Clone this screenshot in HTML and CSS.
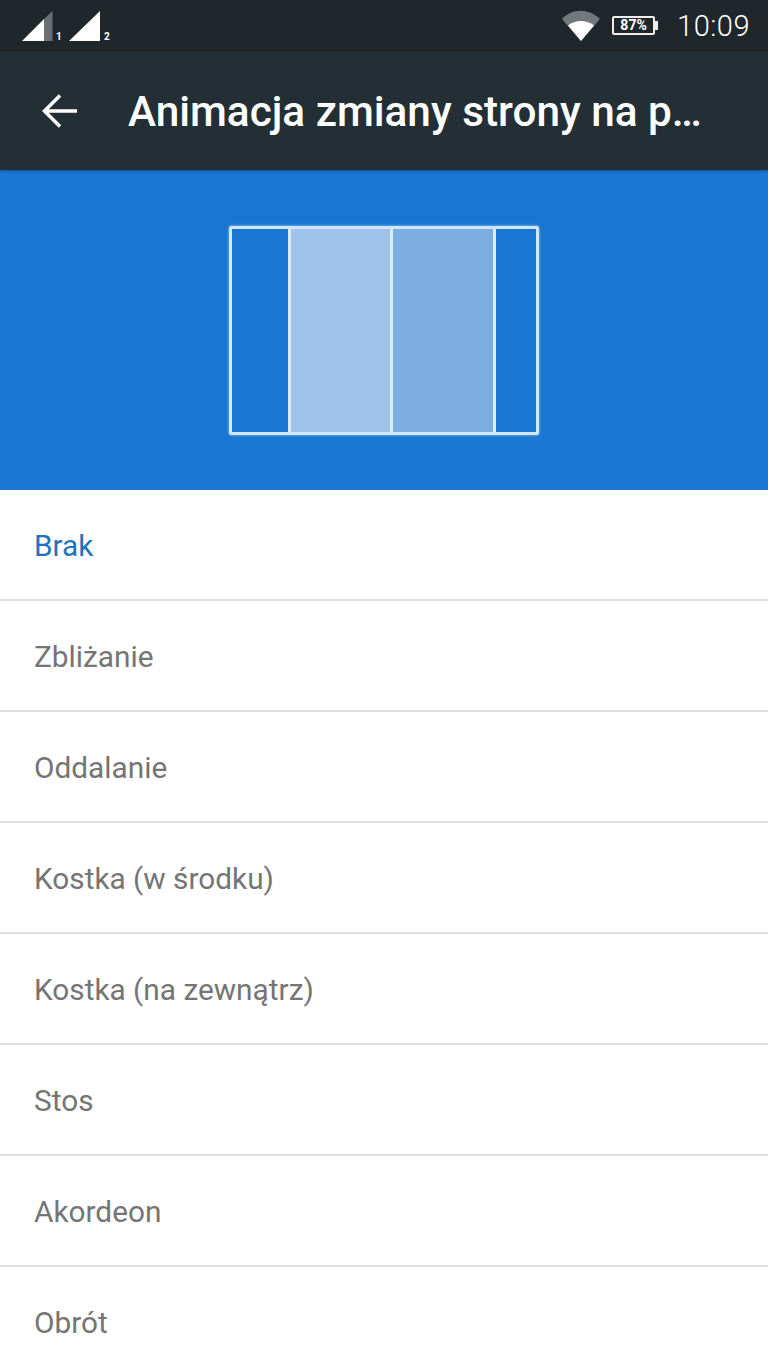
FILE: index.html
```html
<html>

<head>
    <title>Animacja zmiany strony</title>
    <link rel="stylesheet" href="styles.css">
</head>

<body>
    <div class="status-bar">
        <div class="signals">
            <svg class="signal" width="31" height="32" viewBox="0 0 31 32">
                <path d="M22 31H0L22 9z" fill="#fff" />
                <path d="M22 31V9L30.500 1V31z" fill="#6b7173" />
            </svg>
            <span class="sim">1</span>
            <svg class="signal" width="32" height="32" viewBox="0 0 32 32">
                <path d="M0 31L31 1V31z" fill="#fff" />
            </svg>
            <span class="sim">2</span>
        </div>
        <div class="status-right">
            <svg class="wifi" width="38" height="31" viewBox="0 0 38 31">
                <path d="M0 9C10-2 27-2 38 9L19 31z" fill="#73787a" />
                <path d="M6 15.500C13 9.500 25 9.500 32 15.500L19 31z" fill="#fff" />
            </svg>
            <div class="battery">
                <div class="battery-body">87%</div>
                <div class="battery-tip"></div>
            </div>
            <span class="clock">10:09</span>
        </div>
    </div>

    <div class="toolbar">
        <svg class="back" width="36" height="36" viewBox="0 0 36 36">
            <path d="M35 18H3M18 2.500L2.500 18L18 33.500" fill="none" stroke="#fff" stroke-width="3.500" />
        </svg>
        <h1 class="title">Animacja zmiany strony na p…</h1>
    </div>

    <div class="hero">
        <div class="preview">
            <div class="pane pane-side"></div>
            <div class="pane pane-light"></div>
            <div class="pane pane-mid"></div>
            <div class="pane pane-end"></div>
        </div>
    </div>

    <ul class="options">
        <li class="option option-active">Brak</li>
        <li class="option">Zbliżanie</li>
        <li class="option">Oddalanie</li>
        <li class="option">Kostka (w środku)</li>
        <li class="option">Kostka (na zewnątrz)</li>
        <li class="option">Stos</li>
        <li class="option">Akordeon</li>
        <li class="option">Obrót</li>
    </ul>
</body>

</html>
```

FILE: styles.css
```css
html,
body {
    height: 100%;
}

body {
    font-family: Roboto, "Liberation Sans", sans-serif;
    background-color: #fff;
    margin: 0;
    padding: 0;
    overflow: hidden;
}

.status-bar {
    height: 51px;
    background-color: #1f272a;
    color: #fff;
    display: flex;
    align-items: center;
    justify-content: space-between;
    padding: 0 18px 0 22px;
}

.signals {
    display: flex;
    align-items: flex-end;
    height: 32px;
}

.signal {
    display: block;
}

.sim {
    font-size: 10px;
    font-weight: 700;
    width: 13px;
    margin-left: 3px;
    line-height: 10px;
}

.status-right {
    display: flex;
    align-items: center;
}

.wifi {
    margin-right: 12px;
    margin-top: -1px;
}

.battery {
    display: flex;
    align-items: center;
    margin-right: 19px;
}

.battery-body {
    width: 43px;
    height: 19px;
    box-sizing: border-box;
    border: 2px solid #eee;
    border-radius: 2px;
    font-size: 14px;
    font-weight: 700;
    line-height: 15px;
    text-align: center;
}

.battery-tip {
    width: 3px;
    height: 9px;
    background-color: #eee;
}

.clock {
    font-size: 29px;
    font-weight: 300;
    letter-spacing: 0.5px;
}

.toolbar {
    height: 119px;
    background-color: #242f35;
    display: flex;
    align-items: center;
    position: relative;
    z-index: 1;
    box-shadow: 0 1px 3px rgba(0, 0, 0, 0.3);
}

.back {
    margin-left: 42px;
    margin-right: 50px;
}

.title {
    margin: 2px 0 0;
    color: #fff;
    font-size: 42.300px;
    font-weight: 500;
    white-space: nowrap;
}

.hero {
    height: 320px;
    background-color: #1976d2;
    display: flex;
    align-items: center;
    justify-content: center;
}

.preview {
    width: 310px;
    height: 209px;
    box-sizing: border-box;
    border: 3px solid #cfe6fb;
    border-radius: 2px;
    display: flex;
    margin-top: 1px;
    box-shadow: 0 0 3px rgba(255, 255, 255, 0.6);
}

.pane {
    box-sizing: border-box;
    border-right: 3px solid #d9edfc;
}

.pane-side {
    width: 59px;
    background-color: #1976d2;
}

.pane-light {
    width: 102px;
    background-color: #9fc3ea;
}

.pane-mid {
    width: 103px;
    background-color: #7cade1;
}

.pane-end {
    flex: 1;
    border-right: none;
    background-color: #1976d2;
}

.options {
    list-style: none;
    margin: 0;
    padding: 0;
}

.option {
    height: 111px;
    box-sizing: border-box;
    padding: 2px 34px 0;
    border-bottom: 2px solid #dedede;
    color: #757575;
    font-size: 29.800px;
    display: flex;
    align-items: center;
}

.option-active {
    color: #1e73bb;
}
```
